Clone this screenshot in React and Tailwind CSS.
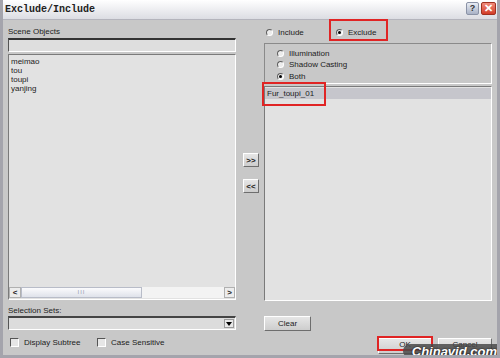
import React from "react";

// Small win-classic style pieces used by the dialog
function Radio({ checked, label, children }) {
  return (
    <div className="relative flex items-center gap-[5px] h-[11px]">
      <span className="w-[7px] h-[7px] rounded-full bg-[#ececec] border border-t-[#5e5e5e] border-l-[#5e5e5e] border-r-white border-b-white flex items-center justify-center">
        {checked && <span className="w-[3px] h-[3px] rounded-full bg-black" />}
      </span>
      <span>{label}</span>
      {children}
    </div>
  );
}

function Check({ label }) {
  return (
    <div className="flex items-center gap-[5px] h-[10px]">
      <span className="w-[9px] h-[9px] bg-[#e6e6e6] border border-t-[#555] border-l-[#555] border-r-white border-b-white" />
      <span>{label}</span>
    </div>
  );
}

function Btn({ className = "", children }) {
  return (
    <div
      className={`relative flex items-center justify-center bg-gradient-to-b from-[#e6e6e6] to-[#cdcdcd] border border-t-white border-l-white border-r-[#6e6e6e] border-b-[#6e6e6e] ${className}`}
    >
      {children}
    </div>
  );
}

export default function App() {
  const objects = ["meimao", "tou", "toupi", "yanjing"];

  return (
    <div className="relative w-[500px] h-[358px] overflow-hidden flex flex-col bg-[#c8c8c8] border-l-[3px] border-r-[3px] border-b-[3px] border-[#a4a4ac] text-[8px] leading-[9px] text-[#1c1c1c] font-['Liberation_Sans',Arial,sans-serif]">

      {/* Title bar */}
      <div className="h-[20px] shrink-0 flex items-center pl-[2px] pr-[1px] bg-gradient-to-b from-white to-[#dcdde3] border-b border-[#b4b4bc]">
        <span className="font-['Liberation_Mono',monospace] font-bold text-[10px] text-[#222]">
          Exclude/Include
        </span>
        <div className="ml-auto flex items-center gap-[2px] pb-[2px]">
          <div className="w-[13px] h-[13px] rounded-[2px] bg-gradient-to-b from-[#e8ecf4] to-[#a9b2c6] border border-[#8a92a6] flex items-center justify-center text-[9px] font-bold text-[#333]">
            ?
          </div>
          <div className="w-[15px] h-[13px] rounded-[2px] bg-gradient-to-b from-[#f08a7a] to-[#d23a26] border border-[#a03020] flex items-center justify-center text-[11px] font-bold text-white">
            ✕
          </div>
        </div>
      </div>

      {/* Body */}
      <div className="flex-1 flex pl-[5px]">

        {/* Left column */}
        <div className="w-[228px] flex flex-col">
          <div className="mt-[7px] h-[9px]">Scene Objects</div>
          <div className="mt-[2px] h-[14px] bg-[#dedede] border-t-2 border-l border-t-[#333] border-l-[#555] border-r border-b border-r-white border-b-white" />

          <div className="mt-[2px] h-[246px] flex flex-col bg-[#e2e2e2] border border-t-[#7a7a7a] border-l-[#7a7a7a] border-r-white border-b-white">
            <div className="pt-[2px] pl-[2px] flex flex-col">
              {objects.map((o) => (
                <div key={o} className="h-[9px]">{o}</div>
              ))}
            </div>
            <div className="flex-1" />
            <div className="h-[11px] mb-[1px] flex">
              <div className="w-[12px] bg-[#ececec] border border-[#b0b0b0] flex items-center justify-center font-bold text-[8px]">&lt;</div>
              <div className="w-[121px] bg-gradient-to-b from-[#fbfbfd] to-[#dfe2ea] border border-[#b8bcc8] flex items-center justify-center text-[6px] text-[#9aa0b0] tracking-[1px]">
                III
              </div>
              <div className="flex-1 bg-[#f3f3f3]" />
              <div className="w-[11px] bg-[#ececec] border border-[#b0b0b0] flex items-center justify-center font-bold text-[8px]">&gt;</div>
            </div>
          </div>

          <div className="mt-[6px] h-[9px]">Selection Sets:</div>
          <div className="mt-[1px] h-[14px] flex bg-[#dcdcdc] border-t-2 border-l border-t-[#444] border-l-[#555] border-r border-b border-r-white border-b-white">
            <div className="flex-1" />
            <div className="w-[10px] my-[1px] mr-[1px] bg-[#e8e8e8] border border-[#9a9a9a] flex items-center justify-center">
              <span className="w-0 h-0 border-l-[3px] border-r-[3px] border-t-[4px] border-l-transparent border-r-transparent border-t-black" />
            </div>
          </div>

          <div className="mt-[7px] flex pl-[2px] gap-[10px]">
            <div className="w-[77px]"><Check label="Display Subtree" /></div>
            <Check label="Case Sensitive" />
          </div>
        </div>

        {/* Middle transfer buttons */}
        <div className="w-[28px] flex flex-col items-start pl-[7px] pt-[133px] gap-[12px]">
          <Btn className="w-[16px] h-[14px] text-[8px] font-bold">&gt;&gt;</Btn>
          <Btn className="w-[16px] h-[14px] text-[8px] font-bold">&lt;&lt;</Btn>
        </div>

        {/* Right column */}
        <div className="w-[228px] flex flex-col">
          <div className="mt-[7px] flex pl-[2px]">
            <div className="w-[70px]"><Radio label="Include" /></div>
            <Radio checked label="Exclude">
              <span className="absolute left-[-7px] top-[-8px] w-[59px] h-[22px] border-2 border-[#e02424]" />
            </Radio>
          </div>

          <div className="mt-[5px] h-[41px] pt-[4px] pl-[12px] flex flex-col border border-t-[#8a8a8a] border-l-[#8a8a8a] border-r-white border-b-white">
            <Radio label="Illumination" />
            <Radio label="Shadow Casting" />
            <div className="h-[1px]" />
            <Radio checked label="Both" />
          </div>

          <div className="mt-[2px] h-[215px] flex flex-col bg-[#e2e2e2] border border-t-[#7a7a7a] border-l-[#7a7a7a] border-r-white border-b-white">
            <div className="relative h-[11px] mt-[1px] bg-[#c6c6cc] pl-[2px] flex items-center">
              Fur_toupi_01
              <span className="absolute left-[-3px] top-[-6px] w-[64px] h-[24px] border-2 border-[#e02424]" />
            </div>
          </div>

          <Btn className="mt-[15px] w-[47px] h-[15px]">Clear</Btn>

          <div className="mt-[7px] flex justify-end gap-[6px]">
            <Btn className="w-[54px] h-[16px] pb-[4px]">
              OK
              <span className="absolute left-[-2px] top-[-3px] w-[56px] h-[15px] border-2 border-[#e02424]" />
            </Btn>
            <Btn className="w-[54px] h-[16px] pb-[4px]">Cancel</Btn>
          </div>
        </div>
      </div>

      {/* Watermark overlay */}
      <div className="absolute right-[-3px] bottom-[-3px] w-[97px] h-[14px] rounded-l-full bg-[#4a4a4a]/85 flex items-center justify-end pr-[3px]">
        <span className="text-[13px] leading-[13px] font-bold italic text-white [text-shadow:0_0_2px_#000]">
          Chinavid.com
        </span>
      </div>
    </div>
  );
}
